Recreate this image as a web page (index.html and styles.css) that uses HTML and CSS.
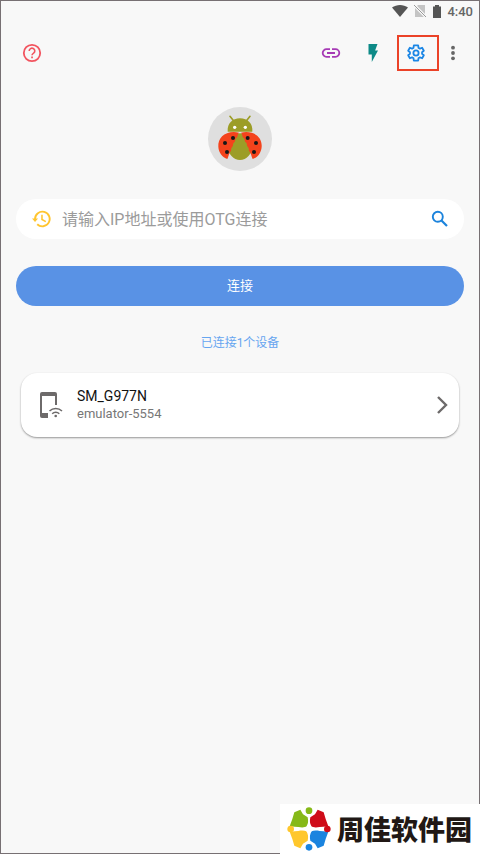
FILE: index.html
```html
<!DOCTYPE html>
<html lang="zh-CN">
<head>
<meta charset="utf-8">
<meta name="viewport" content="width=device-width, initial-scale=1">
<title>设备连接</title>
<link rel="stylesheet" href="styles.css">
</head>
<body>
<div class="screen">
  <div class="status">
    <svg class="wifi" viewBox="0 0 16 14" aria-hidden="true"><path d="M0 3.500C4.500 0 11.500 0 16 3.500L8 13Z"/></svg>
    <svg class="nosim" viewBox="0 0 12 14" aria-hidden="true"><path d="M4 1h7v12H1V4Z" fill="#c4c4c4"/><path d="M0 1l12 12" stroke="#f8f8f8" stroke-width="3"/><path d="M0 1l12 12" stroke="#999" stroke-width="1"/></svg>
    <svg class="battery" viewBox="0 0 8 13" aria-hidden="true"><path d="M2 0h4v1.500H8V13H0V1.500h2Z"/></svg>
    <span>4:40</span>
  </div>
  <header class="toolbar">
    <button class="icon help" aria-label="帮助"><svg viewBox="0 0 20 20"><circle cx="10" cy="10" r="8.200" fill="none" stroke="currentColor" stroke-width="1.800"/><path d="M7.200 7.900a2.800 2.700 0 1 1 4.400 2.200c-1 .7-1.600 1.200-1.600 2.200" fill="none" stroke="currentColor" stroke-width="1.600"/><path d="M9.200 13.600h1.700v1.700H9.200z" fill="currentColor"/></svg></button>
    <div class="actions">
      <button class="icon link" aria-label="链接"><svg viewBox="0 0 20 20"><path d="M9 6.200H5.500a3.800 3.800 0 0 0 0 7.600H9M11 6.200h3.500a3.800 3.800 0 0 1 0 7.600H11M6 10h8" fill="none" stroke="currentColor" stroke-width="1.800"/></svg></button>
      <button class="icon flash" aria-label="快捷"><svg viewBox="0 0 20 20"><path d="M5.500 1h9l-2.400 6.500H15L8.800 19V11.500H5.500Z" fill="currentColor"/></svg></button>
      <button class="icon settings" aria-label="设置"><svg viewBox="2 2 20 20"><path d="M18.700 12.900a7 7 0 0 0 0-1.800l2-1.600-1.900-3.300-2.400 1a7 7 0 0 0-1.600-.9L14.400 3.500h-4.800l-.4 2.800a7 7 0 0 0-1.600.9l-2.400-1-1.900 3.300 2 1.600a7 7 0 0 0 0 1.800l-2 1.600 1.900 3.300 2.400-1a7 7 0 0 0 1.600.9l.4 2.800h4.800l.4-2.800a7 7 0 0 0 1.600-.9l2.400 1 1.900-3.300Z" fill="none" stroke="currentColor" stroke-width="2" stroke-linejoin="round"/><circle cx="12" cy="12" r="2.900" fill="none" stroke="currentColor" stroke-width="2"/></svg></button>
      <button class="icon more" aria-label="更多"><svg viewBox="0 0 20 20" fill="currentColor"><circle cx="10" cy="4.700" r="1.900"/><circle cx="10" cy="10" r="1.900"/><circle cx="10" cy="15.300" r="1.900"/></svg></button>
    </div>
  </header>
  <main>
    <svg class="logo" viewBox="24 21 192 192" aria-hidden="true">
      <circle cx="120" cy="117" r="96" fill="#dfdfdf"/>
      <path d="M90 49l13 16M150 49l-13 16" stroke="#9c9d27" stroke-width="5" stroke-linecap="round"/>
      <path d="M83 95c-2-24 14-40 37-40s39 16 37 40Z" fill="#9c9d27"/>
      <circle cx="104" cy="82" r="5" fill="#fff"/><circle cx="136" cy="82" r="5" fill="#fff"/>
      <ellipse cx="120" cy="140" rx="36" ry="40" fill="#9c9d27"/>
      <path d="M117 98C78 90 53 112 55 140c1 18 12 32 27 37 4-8 5-17 10-23 3-4-1-8 5-14 4-4 0-8 6-13 5-5 0-10 7-14 4-3 2-10 7-15Z" fill="#f4431c"/>
      <path d="M123 98c39-8 64 14 62 42-1 18-12 32-27 37-4-8-5-17-10-23-3-4 1-8-5-14-4-4 0-8-6-13-5-5 0-10-7-14-4-3-2-10-7-15Z" fill="#f4431c"/>
      <g fill="#171717"><circle cx="99" cy="114" r="6"/><circle cx="143" cy="114" r="6"/><circle cx="75" cy="129" r="6"/><circle cx="168" cy="129" r="6"/><circle cx="81" cy="156" r="6"/><circle cx="162" cy="156" r="6"/></g>
    </svg>
    <form class="search">
      <svg class="history" viewBox="0 0 20 20" aria-hidden="true"><path d="M3.200 10a7.700 7.700 0 1 1 2.300 5.500" fill="none" stroke="currentColor" stroke-width="2"/><path d="M0 9.500h6.400l-3.200 3.600Z" fill="currentColor"/><path d="M10.500 5.500v5l4 2.300" fill="none" stroke="currentColor" stroke-width="1.600"/></svg>
      <input type="text" aria-label="IP地址" placeholder="请输入IP地址或使用OTG连接">
      <button type="button" class="find" aria-label="搜索"><svg viewBox="0 0 18 18"><circle cx="6.800" cy="6.800" r="5" fill="none" stroke="currentColor" stroke-width="1.900"/><path d="M10.500 10.500l5.500 5.500" stroke="currentColor" stroke-width="2.200"/></svg></button>
    </form>
    <button class="connect">连接</button>
    <p class="count">已连接1个设备</p>
    <a class="device" href="#">
      <svg class="phone" viewBox="0 0 24 28" aria-hidden="true"><path d="M1 3a2 2 0 0 1 2-2h13a2 2 0 0 1 2 2v11h-2V5H3v17h6v5H3a2 2 0 0 1-2-2Z" fill="currentColor"/><path d="M10.500 20a9 9 0 0 1 12.500 0M13.200 22.800a5 5 0 0 1 7.100 0" fill="none" stroke="currentColor" stroke-width="1.500"/><circle cx="16.700" cy="25" r="1.300" fill="currentColor"/></svg>
      <span class="info"><strong>SM_G977N</strong><small>emulator-5554</small></span>
      <svg class="chevron" viewBox="0 0 12 20" aria-hidden="true"><path d="M2 2l8 8-8 8" fill="none" stroke="currentColor" stroke-width="2.400"/></svg>
    </a>
  </main>
</div>
<aside class="brand">
  <svg viewBox="52 38 132 132" aria-hidden="true">
    <path d="M74 54l18-8 8 14 14 9c2 10 2 18 0 27-10 4-18 4-28 2l-11-1-15-1 8-22Z" fill="#86b918"/>
    <path d="M162 54l-18-8-8 14-14 9c-2 10-2 18 0 27 10 4 18 4 28 2l11-1 15-1-8-22Z" fill="#cf0c19"/>
    <path d="M74 154l18 8 8-14 14-9c2-10 2-18 0-27-10-4-18-4-28-2l-11 1-15 1 8 22Z" fill="#ffc72c"/>
    <path d="M162 154l-18 8-8-14-14-9c-2-10-2-18 0-27 10-4 18-4 28-2l11 1 15 1-8 22Z" fill="#1b84df"/>
    <path d="M118 66q3 32 12 34l20 4-20 4q-9 2-12 34-3-32-12-34l-20-4 20-4q9-2 12-34Z" fill="#fff"/>
    <circle cx="118" cy="49" r="10" fill="#86b918"/><circle cx="173" cy="104" r="10" fill="#cf0c19"/><circle cx="118" cy="159" r="10" fill="#1b84df"/><circle cx="63" cy="104" r="10" fill="#ffc72c"/>
  </svg>
  <span>周佳软件园</span>
</aside>
</body>
</html>
```
FILE: styles.css
```css
* { box-sizing: border-box; }

body {
  margin: 0;
  background: #f8f8f8;
  font-family: Roboto, "Noto Sans CJK SC", sans-serif;
}

button {
  border: 0;
  padding: 0;
  background: none;
  font: inherit;
}

svg { display: block; flex: none; }

.screen {
  min-height: 100vh;
  border: 1px solid #777073;
}

.status {
  display: flex;
  align-items: center;
  justify-content: flex-end;
  height: 20px;
  padding-right: 6px;
  color: #666;
  font-size: 13px;
  font-weight: 500;
}

.wifi { width: 16px; height: 14px; margin-right: 6px; fill: #555; }
.nosim { width: 12px; height: 14px; margin-right: 7px; }
.battery { width: 8px; height: 13px; margin-right: 6px; fill: #555; }

.toolbar {
  display: flex;
  align-items: center;
  justify-content: space-between;
  height: 64px;
  padding: 0 15px 0 20px;
}

.actions { display: flex; align-items: center; }

.icon {
  display: flex;
  align-items: center;
  justify-content: center;
  width: 42px;
  height: 36px;
}

.icon svg { width: 20px; height: 20px; }
.help { width: 22px; color: #f2545f; }
.link { color: #a63ab5; }
.flash { color: #0d8a87; }
.settings { margin-left: 3px; padding-right: 4px; border: 2px solid #eb4228; color: #1b86e5; }
.settings svg { width: 18px; height: 18px; }
.more { width: 20px; margin-left: 4px; margin-right: 1px; color: #666; }

main {
  display: flex;
  flex-direction: column;
  padding: 22px 15px;
}

.logo { width: 64px; height: 64px; align-self: center; }

.search {
  display: flex;
  align-items: center;
  height: 40px;
  margin-top: 28px;
  padding: 0 15px 0 16px;
  border-radius: 20px;
  background: #fff;
}

.history { width: 19px; height: 20px; color: #ffc52f; }

.search input {
  flex: 1;
  min-width: 0;
  margin-left: 11px;
  padding: 0;
  border: 0;
  outline: 0;
  background: none;
  font: 16px Roboto, "Noto Sans CJK SC", sans-serif;
}

.search input::placeholder { color: #9b9b9b; opacity: 1; }
.find { color: #1b83dc; }
.find svg { width: 18px; height: 18px; }

.connect {
  height: 40px;
  margin-top: 27px;
  padding-bottom: 3px;
  border-radius: 20px;
  background: #5992e5;
  color: #fff;
  font-size: 13px;
}

.count {
  margin: 27px 0 0;
  color: #66a5f0;
  font-size: 12px;
  line-height: 20px;
  text-align: center;
}

.device {
  display: flex;
  align-items: center;
  height: 64px;
  margin: 20px 5px 0;
  padding: 0 11px 0 18px;
  border-radius: 16px;
  background: #fff;
  box-shadow: 0 1px 2px rgba(0, 0, 0, .4);
  color: #6d6a6a;
  text-decoration: none;
}

.phone { width: 24px; height: 28px; }
.info { display: flex; flex: 1; flex-direction: column; margin-left: 14px; }
.info strong { color: #111; font-size: 14px; font-weight: 400; line-height: 18px; }
.info small { color: #777; font-size: 13px; line-height: 18px; }
.chevron { width: 12px; height: 20px; }

.brand {
  position: fixed;
  right: 0;
  bottom: 0;
  display: flex;
  align-items: center;
  gap: 6px;
  width: 200px;
  height: 50px;
  padding-left: 7px;
  background: #fff;
  color: #211815;
  font: 900 27px "Noto Sans CJK SC", sans-serif;
  white-space: nowrap;
}

.brand svg { width: 44px; height: 44px; }
.brand span { padding-bottom: 2px; }
```
